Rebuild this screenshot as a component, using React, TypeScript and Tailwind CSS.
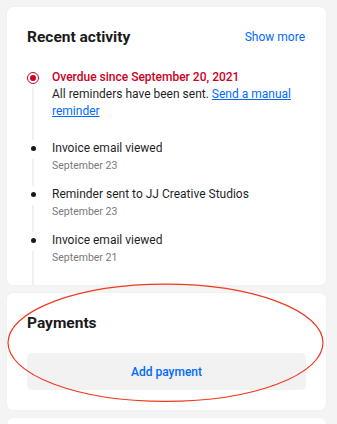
import React from "react";

const items = [
  { title: "Invoice email viewed", date: "September 23" },
  { title: "Reminder sent to JJ Creative Studios", date: "September 23" },
  { title: "Invoice email viewed", date: "September 21" },
];

export default function App() {
  return (
    <div
      className="relative w-[337px] h-[424px] overflow-hidden bg-[#f4f4f4] pl-[7px] pt-[7px]"
      style={{ fontFamily: "Roboto, 'Noto Sans', sans-serif" }}
    >
      <div className="flex w-[319px] flex-col gap-[8px]">
        {/* Recent activity card */}
        <div className="rounded-[6px] bg-white px-[20px] pt-[20px] shadow-[0_0_2px_rgba(0,0,0,0.06)]">
          <div className="flex items-center justify-between">
            <h2 className="text-[15.5px] font-bold leading-[20px] text-[#1a1a1a]">Recent activity</h2>
            <span className="pr-[1px] text-[12px] leading-[20px] text-[#006aff]">Show more</span>
          </div>
          <div className="mt-[22px] flex flex-col">
            {/* Overdue item */}
            <div className="flex">
              <div className="flex w-[12px] flex-col items-center">
                <div className="flex h-[17px] items-center">
                  <div className="flex h-[12px] w-[12px] items-center justify-center rounded-full border-[1.5px] border-[#cc0023]">
                    <div className="h-[6px] w-[6px] rounded-full bg-[#cc0023]" />
                  </div>
                </div>
                <div className="mt-[2px] w-[2px] flex-1 bg-[#f0f0f0]" />
              </div>
              <div className="ml-[13px] w-[240px] pb-[20px] text-[12px] leading-[17px]">
                <div className="font-medium text-[#cc0023]">Overdue since September 20, 2021</div>
                <div className="text-[#1f1f1f]">
                  All reminders have been sent.{" "}
                  <span className="text-[#006aff] underline">Send a manual reminder</span>
                </div>
              </div>
            </div>
            {items.map((it, i) => (
              <div key={i} className="flex">
                <div className="flex w-[12px] flex-col items-center">
                  <div className="flex h-[17px] items-center">
                    <div className="h-[5px] w-[5px] rounded-full bg-[#1a1a1a]" />
                  </div>
                  <div className="mt-[2px] w-[2px] flex-1 bg-[#f0f0f0]" />
                </div>
                <div className={"ml-[13px] " + (i === items.length - 1 ? "pb-[19px]" : "pb-[12px]")}>
                  <div className="text-[12px] leading-[17px] text-[#1f1f1f]">{it.title}</div>
                  <div className="text-[10.5px] leading-[17px] text-[#7a7a7a]">{it.date}</div>
                </div>
              </div>
            ))}
          </div>
        </div>

        {/* Payments card */}
        <div className="rounded-[6px] bg-white px-[20px] py-[20px] shadow-[0_0_2px_rgba(0,0,0,0.06)]">
          <h2 className="text-[15.5px] font-bold leading-[20px] text-[#1a1a1a]">Payments</h2>
          <div className="mt-[20px] flex h-[37px] items-center justify-center rounded-[5px] bg-[#f2f2f2] text-[12px] font-medium text-[#006aff]">
            Add payment
          </div>
        </div>

        {/* Next card */}
        <div className="h-[40px] rounded-[6px] bg-white shadow-[0_0_2px_rgba(0,0,0,0.06)]" />
      </div>

      <svg className="pointer-events-none absolute left-0 top-0" width="337" height="424">
        <ellipse cx="165.5" cy="342.8" rx="157.5" ry="58.6" fill="none" stroke="#ef3a1f" strokeWidth="1.2" />
      </svg>
    </div>
  );
}
